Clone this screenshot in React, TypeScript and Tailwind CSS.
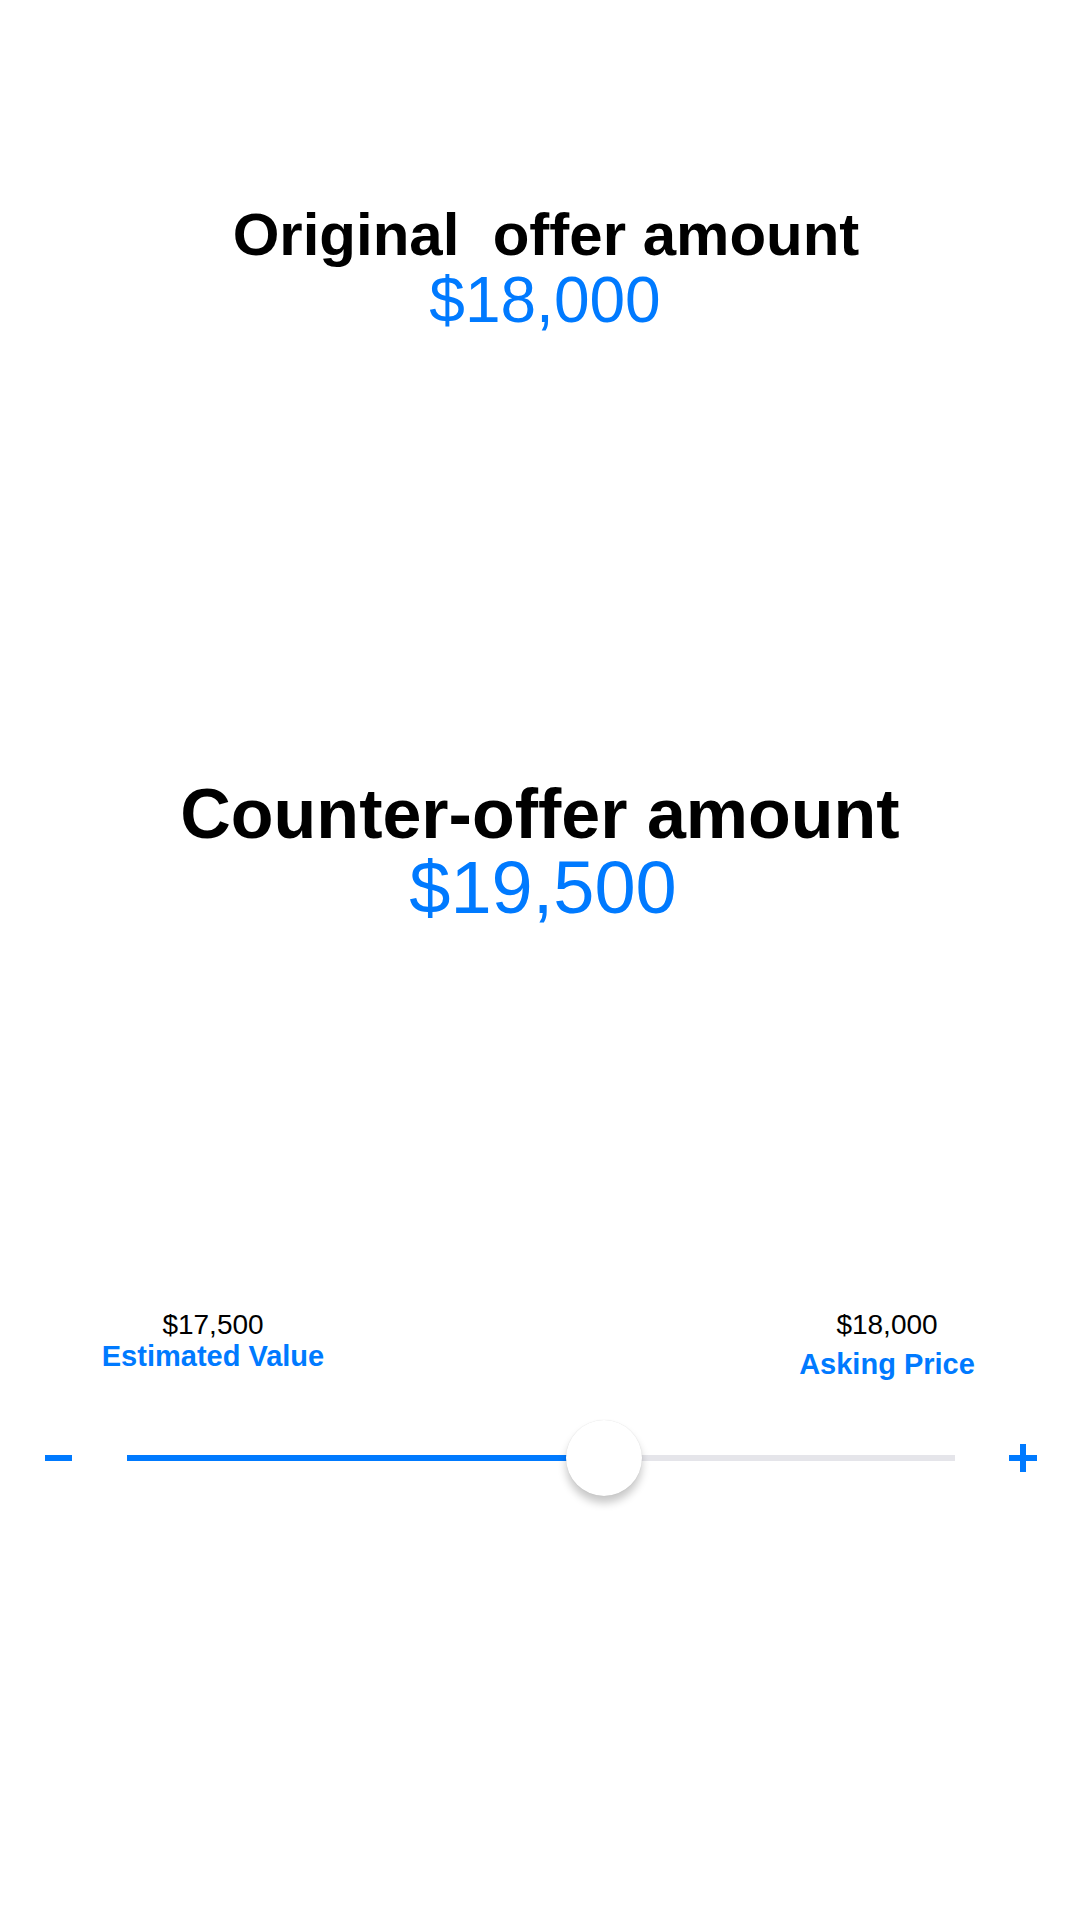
import { useState } from 'react'

const MIN = 17500

export default function App() {
  const [counter] = useState(19500)
  const filled = 477

  return (
    <div
      className="w-[1080px] h-[1920px] bg-white flex flex-col overflow-hidden"
      style={{ fontFamily: '"Liberation Sans", Arial, sans-serif' }}
    >
      <div className="mt-[205px] flex flex-col items-center">
        <h1 className="text-[60px] leading-none font-bold text-black pl-[12px] whitespace-pre">
          {'Original  offer amount'}
        </h1>
        <div className="mt-[3px] text-[64px] leading-none text-[#007aff] pl-[10px]">$18,000</div>
      </div>

      <div className="mt-[447px] flex flex-col items-center">
        <h2 className="text-[70px] leading-none font-bold text-black">Counter-offer amount</h2>
        <div className="mt-[2px] text-[74px] leading-none text-[#007aff] pl-[6px]">
          ${counter.toLocaleString('en-US')}
        </div>
      </div>

      <div className="mt-[386px] flex justify-between pl-[88px] pr-[68px]">
        <PriceLabel value={MIN} label="Estimated Value" gap="mt-[3px]" />
        <PriceLabel value={18000} label="Asking Price" gap="mt-[11px]" />
      </div>

      <div className="mt-[41px] flex items-center h-[76px]">
        <div className="ml-[45px] w-[27px] h-[6px] bg-[#007aff]" />
        <div className="ml-[55px] relative w-[828px] h-[6px] bg-[#e5e5ea]">
          <div className="absolute left-0 top-0 h-[6px] bg-[#007aff]" style={{ width: filled }} />
          <div
            className="absolute top-[-35px] w-[76px] h-[76px] rounded-full bg-white shadow-[0_7px_9px_rgba(0,0,0,0.22),0_0_1px_rgba(0,0,0,0.15)]"
            style={{ left: filled - 38 }}
          />
        </div>
        <div className="ml-[54px] relative w-[28px] h-[28px]">
          <div className="absolute left-0 top-[11px] w-[28px] h-[6px] bg-[#007aff]" />
          <div className="absolute left-[11px] top-0 w-[6px] h-[28px] bg-[#007aff]" />
        </div>
      </div>
    </div>
  )
}

function PriceLabel({ value, label, gap }: { value: number; label: string; gap: string }) {
  return (
    <div className="w-[250px] flex flex-col items-center">
      <span className="text-[28px] leading-none text-black">${value.toLocaleString('en-US')}</span>
      <span className={`${gap} text-[29px] leading-none font-bold text-[#007aff]`}>{label}</span>
    </div>
  )
}
